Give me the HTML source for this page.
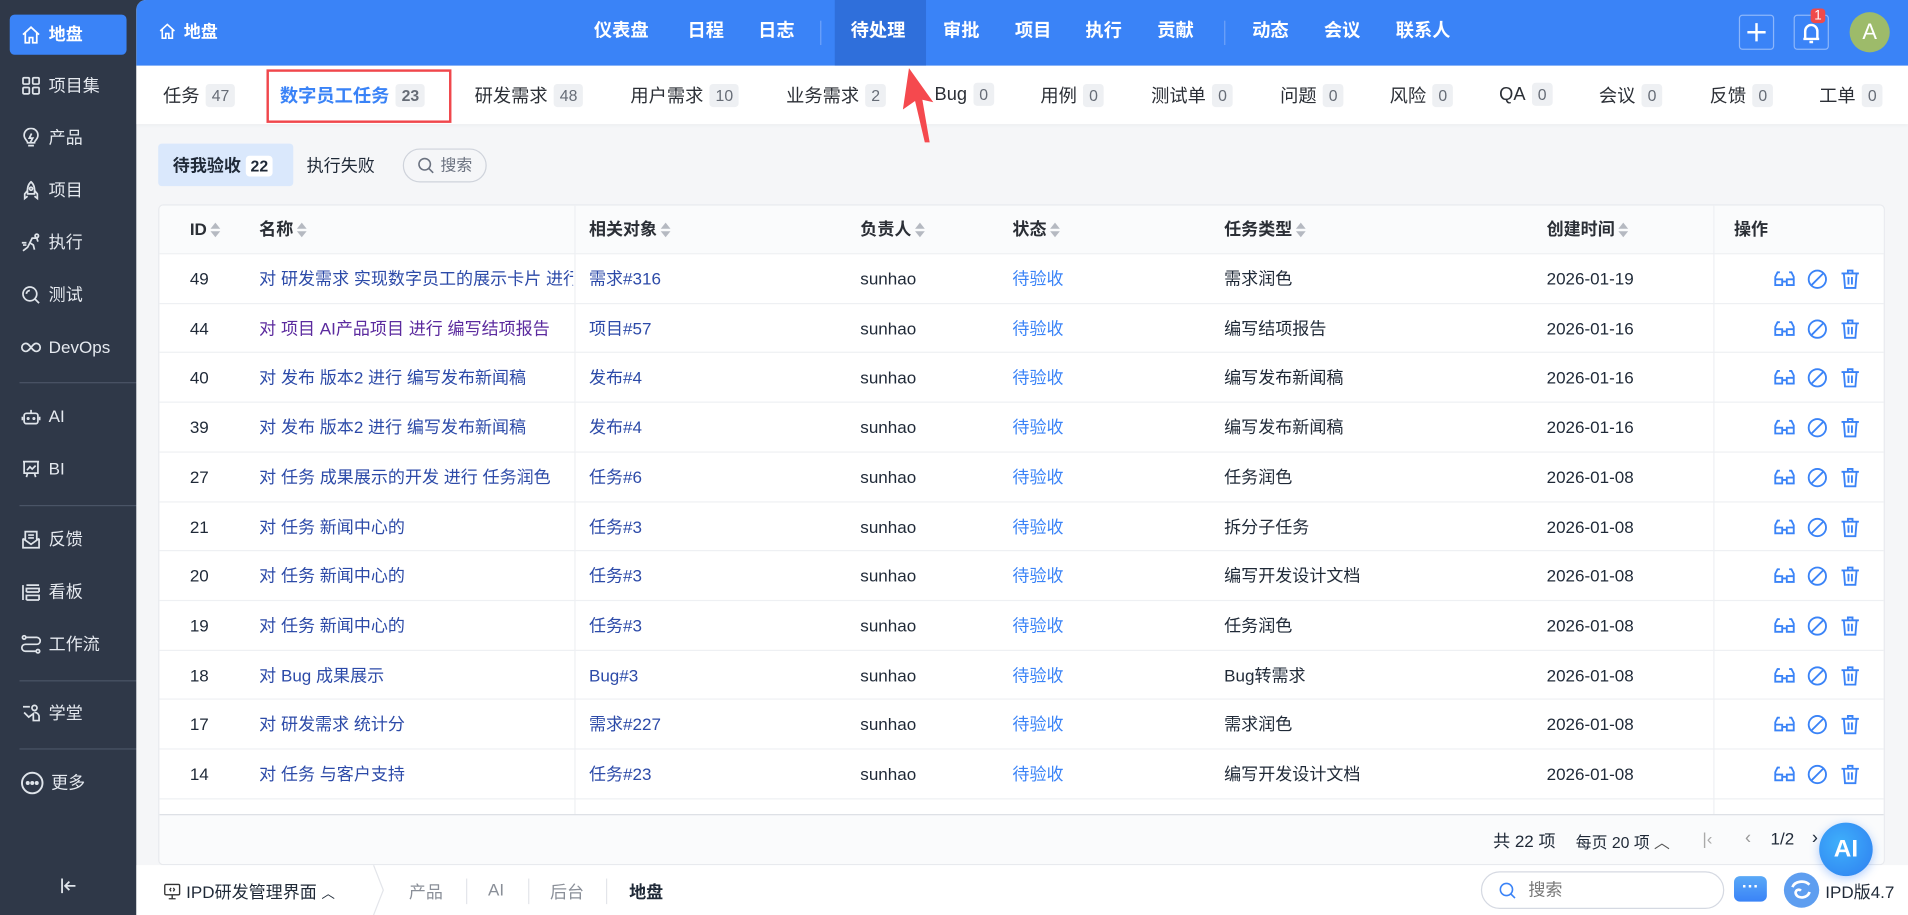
<!DOCTYPE html>
<html><head><meta charset="utf-8"><style>
*{box-sizing:border-box;margin:0;padding:0}
html,body{width:1908px;height:915px;overflow:hidden;background:#2f3848}
#w{position:absolute;left:0;top:0;width:1568px;height:752px;transform:scale(1.21684);transform-origin:0 0;font-family:"Liberation Sans","Noto Sans CJK SC",sans-serif;color:#1f2937;font-size:14px}
.a{position:absolute;white-space:nowrap}
#sb{left:0;top:0;width:112px;height:752px;background:#2f3848}
.si{position:absolute;left:17px;color:#e5e9ef;font-size:14px;display:flex;align-items:center;gap:6px;height:20px}
.si svg{width:17px;height:17px;stroke:#dfe4ea;fill:none;stroke-width:1.5}
.dv{position:absolute;left:16px;width:104px;height:1px;background:#4a5466}
#main{left:112px;top:0;width:1456px;height:752px;background:#f5f6f8;border-radius:8px 0 0 0;overflow:hidden}
#hd{left:0;top:0;width:1456px;height:54px;background:#3a83f7}
.nv{position:absolute;top:0;height:54px;line-height:52px;color:#fff;font-size:15px;font-weight:bold}
#tb{left:0;top:54px;width:1456px;height:48px;background:#fff;box-shadow:0 1px 3px rgba(0,0,0,.04)}
.tab{position:absolute;top:14px;font-size:15px;color:#2b2f36;display:flex;align-items:center;gap:5px}
.bd{display:inline-block;background:#eef0f3;color:#666c76;font-size:13px;padding:1px 5px;border-radius:3px;line-height:17px}
.card{left:18px;top:168px;width:1419px;height:543px;background:#fff;border:1px solid #e8eaee;border-radius:4px;overflow:hidden}
.th{position:absolute;top:0;height:39px;line-height:39px;font-weight:bold;font-size:14px;color:#2b2f36}
.srt{display:inline-block;vertical-align:middle;margin-left:3px;width:9px;height:12px;position:relative}
.srt:before{content:"";position:absolute;left:0;top:0;border:4.5px solid transparent;border-bottom:5px solid #b5b9c1;border-top:0}
.srt:after{content:"";position:absolute;left:0;top:7px;border:4.5px solid transparent;border-top:5px solid #b5b9c1;border-bottom:0}
.row{position:absolute;left:0;width:1419px;height:41px;border-top:1px solid #eef0f3}
.c{position:absolute;top:0;line-height:40px;font-size:14px;white-space:nowrap;overflow:hidden}
.lk{color:#2c4aa8}.st{color:#3a83f7}
.ops{position:absolute;left:1326px;top:11px;display:flex;gap:8px}
.ops svg{width:19px;height:19px;stroke:#3a83f7;fill:none;stroke-width:1.6}
#bb{left:0;top:711px;width:1456px;height:41px;background:#fff}
</style></head><body><div id="w">
<div class="a" id="sb">
 <div class="a" style="left:8px;top:12px;width:96px;height:33px;background:#3a83f7;border-radius:4px"></div>
 <div class="si" style="top:18px;font-weight:bold;color:#fff"><svg viewBox="0 0 18 18" style="stroke:#fff"><path d="M2 9L9 2.5 16 9M4 7.5V16h3.5v-4.5h3V16H14V7.5"/></svg>地盘</div>
 <div class="si" style="top:60px"><svg viewBox="0 0 18 18"><rect x="2" y="2" width="5.5" height="5.5" rx="1"/><rect x="10.5" y="2" width="5.5" height="5.5" rx="1"/><rect x="2" y="10.5" width="5.5" height="5.5" rx="1"/><rect x="10.5" y="10.5" width="5.5" height="5.5" rx="1"/></svg>项目集</div>
 <div class="si" style="top:103px"><svg viewBox="0 0 18 18"><path d="M6 13c0-2-3-3-3-6.5a6 6 0 0112 0C15 10 12 11 12 13zM6.5 15.5h5M9.5 5L7.5 9h3l-2 3.5"/></svg>产品</div>
 <div class="si" style="top:146px"><svg viewBox="0 0 18 18"><path d="M9 1.5c3 2.5 3.5 6 3 10.5H6C5.5 7.5 6 4 9 1.5zM6 9l-2.5 3v4l2.5-2M12 9l2.5 3v4l-2.5-2"/><circle cx="9" cy="7.5" r="1.3"/></svg>项目</div>
 <div class="si" style="top:189px"><svg viewBox="0 0 18 18"><path d="M2 16l4-3 2-4 3 2 1 4M8 9l2-4h4l1 3M1 9h4M2 11h3"/><circle cx="14" cy="3" r="1.5"/></svg>执行</div>
 <div class="si" style="top:232px"><svg viewBox="0 0 18 18"><circle cx="8" cy="8" r="6"/><path d="M12.5 12.5l3.5 3.5M5 8a3 3 0 013-3"/></svg>测试</div>
 <div class="si" style="top:275px"><svg viewBox="0 0 18 18"><path d="M9 9c-2-2.5-3-3.5-4.5-3.5a3.5 3.5 0 000 7C6 12.5 7 11.5 9 9s3-3.5 4.5-3.5a3.5 3.5 0 010 7C12 12.5 11 11.5 9 9z"/></svg>DevOps</div>
 <div class="dv" style="top:314px"></div>
 <div class="si" style="top:332px"><svg viewBox="0 0 18 18"><rect x="3" y="6" width="12" height="9" rx="2"/><path d="M9 6V3M1.5 9v3M16.5 9v3"/><circle cx="6.5" cy="10.5" r=".6"/><circle cx="11.5" cy="10.5" r=".6"/></svg>AI</div>
 <div class="si" style="top:375px"><svg viewBox="0 0 18 18"><path d="M2 2.5h14M3 2.5v10h12v-10M6 12.5L5 16M12 12.5l1 3.5M5.5 10l2.5-3 2 2 3-3"/></svg>BI</div>
 <div class="dv" style="top:415px"></div>
 <div class="si" style="top:433px"><svg viewBox="0 0 18 18"><path d="M2 8v8h14V8M2 8l7 5 7-5M4 9V2h10v7M6.5 5h5M6.5 7.5h5"/></svg>反馈</div>
 <div class="si" style="top:476px"><svg viewBox="0 0 18 18"><path d="M2 3v13M5 3h11M5 9h11M5 16h11M5 9V6h11v3M5 16v-4h11v4"/></svg>看板</div>
 <div class="si" style="top:519px"><svg viewBox="0 0 18 18"><circle cx="3" cy="3" r="1.5"/><circle cx="15" cy="15" r="1.5"/><path d="M4.5 3H14a3 3 0 010 6H4a3 3 0 000 6h9.5"/></svg>工作流</div>
 <div class="dv" style="top:559px"></div>
 <div class="si" style="top:576px"><svg viewBox="0 0 18 18"><circle cx="12" cy="4" r="2.2"/><path d="M2 3h6M3 8l4 4 4-3v6h5v-4a4 4 0 00-4-3"/></svg>学堂</div>
 <div class="dv" style="top:615px"></div>
 <div class="si" style="top:633px"><svg viewBox="0 0 18 18" style="width:19px;height:19px"><circle cx="9" cy="9" r="8"/><circle cx="5.5" cy="9" r=".8" fill="#dfe4ea"/><circle cx="9" cy="9" r=".8" fill="#dfe4ea"/><circle cx="12.5" cy="9" r=".8" fill="#dfe4ea"/></svg>更多</div>
 <div class="a" style="left:48px;top:720px;color:#dfe4ea;font-size:16px"><svg width="16" height="16" viewBox="0 0 16 16" fill="none" stroke="#dfe4ea" stroke-width="1.5"><path d="M3 2v12M14 8H6M9 4.5L5.5 8 9 11.5"/></svg></div>
</div>
<div class="a" id="main">
 <div class="a" id="hd">
  <div class="nv" style="left:18px;font-size:14px"><svg width="15" height="15" viewBox="0 0 18 18" fill="none" stroke="#fff" stroke-width="1.6" style="vertical-align:-2px;margin-right:6px"><path d="M2 9L9 2.5 16 9M4 7.5V16h3.5v-4.5h3V16H14V7.5"/></svg>地盘</div>
  <div class="nv" style="left:376px">仪表盘</div>
  <div class="nv" style="left:453px">日程</div>
  <div class="nv" style="left:511px">日志</div>
  <div class="a" style="left:562px;top:17px;width:1px;height:20px;background:#6fa3f9"></div>
  <div class="a" style="left:574px;top:0;width:75px;height:54px;background:#2f6fdb"></div>
  <div class="nv" style="left:587px">待处理</div>
  <div class="nv" style="left:663px">审批</div>
  <div class="nv" style="left:722px">项目</div>
  <div class="nv" style="left:780px">执行</div>
  <div class="nv" style="left:839px">贡献</div>
  <div class="a" style="left:894px;top:17px;width:1px;height:20px;background:#6fa3f9"></div>
  <div class="nv" style="left:917px">动态</div>
  <div class="nv" style="left:976px">会议</div>
  <div class="nv" style="left:1035px">联系人</div>
  <div class="a" style="left:1317px;top:12px;width:29px;height:29px;border:1px solid #8cb6fb;border-radius:3px"><svg width="27" height="27" viewBox="0 0 27 27" stroke="#fff" stroke-width="2"><path d="M13.5 6v15M6 13.5h15"/></svg></div>
  <div class="a" style="left:1362px;top:12px;width:29px;height:29px;border:1px solid #8cb6fb;border-radius:3px"><svg width="27" height="27" viewBox="0 0 27 27" fill="none" stroke="#fff" stroke-width="2"><path d="M8.5 19V12.5a5 5 0 0110 0V19zM7 19h13M12 21.5h3"/></svg></div>
  <div class="a" style="left:1376px;top:7px;background:#f04a4a;color:#fff;font-size:11px;line-height:12px;padding:0 3px;border-radius:3px">1</div>
  <div class="a" style="left:1408px;top:10px;width:33px;height:33px;border-radius:50%;background:#9dbb6a;color:#fff;font-size:18px;text-align:center;line-height:33px">A</div>
 </div>
 <div class="a" id="tb">
  <div class="tab" style="left:22px">任务<span class="bd">47</span></div>
  <div class="a" style="left:107px;top:3px;width:152px;height:44px;border:2px solid #f0474c"></div>
  <div class="tab" style="left:118px;color:#3a83f7;font-weight:bold">数字员工任务<span class="bd" style="font-weight:bold">23</span></div>
  <div class="tab" style="left:278px">研发需求<span class="bd">48</span></div>
  <div class="tab" style="left:406px">用户需求<span class="bd">10</span></div>
  <div class="tab" style="left:534px">业务需求<span class="bd">2</span></div>
  <div class="tab" style="left:656px">Bug<span class="bd">0</span></div>
  <div class="tab" style="left:743px">用例<span class="bd">0</span></div>
  <div class="tab" style="left:834px">测试单<span class="bd">0</span></div>
  <div class="tab" style="left:940px">问题<span class="bd">0</span></div>
  <div class="tab" style="left:1030px">风险<span class="bd">0</span></div>
  <div class="tab" style="left:1120px">QA<span class="bd">0</span></div>
  <div class="tab" style="left:1202px">会议<span class="bd">0</span></div>
  <div class="tab" style="left:1293px">反馈<span class="bd">0</span></div>
  <div class="tab" style="left:1383px">工单<span class="bd">0</span></div>
 </div>
 <div class="a" style="left:18px;top:118px;width:111px;height:35px;background:#dae8fc;border-radius:3px"></div>
 <div class="a" style="left:30px;top:126px;font-weight:bold;font-size:14px">待我验收 <span style="background:#fff;padding:1px 4px;border-radius:3px;font-size:13px">22</span></div>
 <div class="a" style="left:140px;top:126px;font-size:14px">执行失败</div>
 <div class="a" style="left:219px;top:122px;width:69px;height:28px;border:1px solid #cfd3db;border-radius:14px;color:#6b7280;font-size:13px;line-height:26px;padding-left:30px">搜索<svg width="14" height="14" viewBox="0 0 14 14" fill="none" stroke="#6b7280" stroke-width="1.3" style="position:absolute;left:11px;top:6px"><circle cx="6" cy="6" r="4.7"/><path d="M9.5 9.5L13 13"/></svg></div>
 <div class="a card">
  <div class="a" style="left:0;top:0;width:1419px;height:39px;background:#fafbfc"></div>
  <div class="a" style="left:341px;top:0;width:1px;height:500px;background:#eef0f3"></div>
  <div class="a" style="left:1277px;top:0;width:1px;height:500px;background:#eef0f3"></div>
  <div class="th" style="left:25px">ID<span class="srt"></span></div>
  <div class="th" style="left:82px">名称<span class="srt"></span></div>
  <div class="th" style="left:353px">相关对象<span class="srt"></span></div>
  <div class="th" style="left:576px">负责人<span class="srt"></span></div>
  <div class="th" style="left:701px">状态<span class="srt"></span></div>
  <div class="th" style="left:875px">任务类型<span class="srt"></span></div>
  <div class="th" style="left:1140px">创建时间<span class="srt"></span></div>
  <div class="th" style="left:1294px">操作</div>
  <div id="rows"></div>
  <div class="a" style="left:0;top:500px;width:1419px;height:43px;background:#fafbfc;border-top:1px solid #dcdfe5"></div>
  <div class="a" style="left:1096px;top:512px;font-size:14px">共 22 项</div>
  <div class="a" style="left:1164px;top:513px;font-size:13px">每页 20 项 <span style="color:#555">︿</span></div>
  <div class="a" style="left:1268px;top:512px;color:#aaa;font-size:14px">|‹</div>
  <div class="a" style="left:1303px;top:511px;color:#999;font-size:15px">‹</div>
  <div class="a" style="left:1324px;top:512px;font-size:14px">1/2</div>
  <div class="a" style="left:1358px;top:511px;font-size:15px">›</div>
 </div>
 <div class="a" id="bb">
  <div class="a" style="left:22px;top:12px;font-size:14px"><svg width="15" height="15" viewBox="0 0 16 16" fill="none" stroke="#333" stroke-width="1.2" style="vertical-align:-2px;margin-right:4px"><rect x="1.5" y="2" width="13" height="9" rx="1"/><path d="M8 11v3M5 14.5h6M7 5l-1 1.5 1 1.5M9 5l1 1.5-1 1.5"/></svg>IPD研发管理界面 <span style="font-size:11px">︿</span></div>
  <svg class="a" style="left:194px;top:0" width="12" height="41" viewBox="0 0 12 41" fill="none" stroke="#e3e5ea"><path d="M1 0l8 20.5L1 41"/></svg>
  <div class="a" style="left:224px;top:12px;color:#8a8f98">产品</div>
  <div class="a" style="left:271px;top:11px;width:1px;height:21px;background:#e3e5ea"></div>
  <div class="a" style="left:289px;top:12px;color:#8a8f98">AI</div>
  <div class="a" style="left:322px;top:11px;width:1px;height:21px;background:#e3e5ea"></div>
  <div class="a" style="left:340px;top:12px;color:#8a8f98">后台</div>
  <div class="a" style="left:386px;top:11px;width:1px;height:21px;background:#e3e5ea"></div>
  <div class="a" style="left:405px;top:12px;font-weight:bold">地盘</div>
  <div class="a" style="left:1105px;top:5px;width:200px;height:31px;border:1px solid #d5d9e2;border-radius:16px;color:#777;line-height:29px;padding-left:38px">搜索<svg width="16" height="16" viewBox="0 0 16 16" fill="none" stroke="#3a83f7" stroke-width="1.3" style="position:absolute;left:13px;top:7px"><circle cx="7" cy="7" r="5"/><path d="M10.5 10.5L14 14"/></svg></div>
  <div class="a" style="left:1313px;top:9px;width:27px;height:21px;background:linear-gradient(#5aa9f7,#3a83f7);border-radius:5px;color:#fff;text-align:center;line-height:16px;font-weight:bold;font-size:14px">···</div>
  <div class="a" style="left:1354px;top:6px;width:29px;height:29px;border-radius:50%;background:#5e9ef0"><svg width="29" height="29" viewBox="0 0 29 29" fill="none" stroke="#fff" stroke-width="2.2"><path d="M7 12c2-5 10-6 14-2M21 16c-1 5-9 6-11 2-1.5-3 2-5 4-3"/></svg></div>
  <div class="a" style="left:1388px;top:12px;font-size:14px">IPD版4.7</div>
 </div>
 <div class="a" style="left:1383px;top:676px;width:44px;height:44px;border-radius:50%;background:radial-gradient(circle at 40% 40%,#3fb0fb,#2e7ef0);box-shadow:0 2px 8px rgba(58,131,247,.4);color:#fff;font-weight:bold;font-size:20px;text-align:center;line-height:44px">AI</div>
</div>
<svg class="a" style="left:0;top:0" width="800" height="130"><polygon points="747,56 767,84 758,82 764,117 760,117 752,83 742,90" fill="#f5494e"/></svg>
</div>
<script>
var d=[["49","对 研发需求 实现数字员工的展示卡片 进行 需求润色","需求#316","需求润色","2026-01-19"],["44","对 项目 AI产品项目 进行 编写结项报告","项目#57","编写结项报告","2026-01-16",1],["40","对 发布 版本2 进行 编写发布新闻稿","发布#4","编写发布新闻稿","2026-01-16"],["39","对 发布 版本2 进行 编写发布新闻稿","发布#4","编写发布新闻稿","2026-01-16"],["27","对 任务 成果展示的开发 进行 任务润色","任务#6","任务润色","2026-01-08"],["21","对 任务 新闻中心的","任务#3","拆分子任务","2026-01-08"],["20","对 任务 新闻中心的","任务#3","编写开发设计文档","2026-01-08"],["19","对 任务 新闻中心的","任务#3","任务润色","2026-01-08"],["18","对 Bug 成果展示","Bug#3","Bug转需求","2026-01-08"],["17","对 研发需求 统计分","需求#227","需求润色","2026-01-08"],["14","对 任务 与客户支持","任务#23","编写开发设计文档","2026-01-08"],["13","对 任务 成果展示的","任务#4","任务润色","2026-01-08"]];
var ic='<div class="ops"><svg viewBox="0 0 20 20"><path d="M2 13V8l2-4h2M18 13V8l-2-4h-2M2 10h6v5H2zM12 10h6v5h-6zM8 12h4"/></svg><svg viewBox="0 0 20 20"><circle cx="10" cy="10" r="7.5"/><path d="M5 15L15 5"/></svg><svg viewBox="0 0 20 20"><path d="M2.5 5h15M8 5V2.5h4V5M4.5 5l1 12.5h9l1-12.5M8.5 8v6.5M11.5 8v6.5"/></svg></div>';
var h='';d.forEach(function(r,i){h+='<div class="row" style="top:'+(39+i*40.7)+'px"><div class="c" style="left:25px">'+r[0]+'</div><div class="c lk" style="left:82px;width:258px;'+(r[5]?'color:#5b2a9e':'')+'">'+r[1]+'</div><div class="c lk" style="left:353px">'+r[2]+'</div><div class="c" style="left:576px">sunhao</div><div class="c st" style="left:701px">待验收</div><div class="c" style="left:875px">'+r[3]+'</div><div class="c" style="left:1140px">'+r[4]+'</div>'+ic+'</div>';});
document.getElementById('rows').innerHTML=h;
</script>
</body></html>
